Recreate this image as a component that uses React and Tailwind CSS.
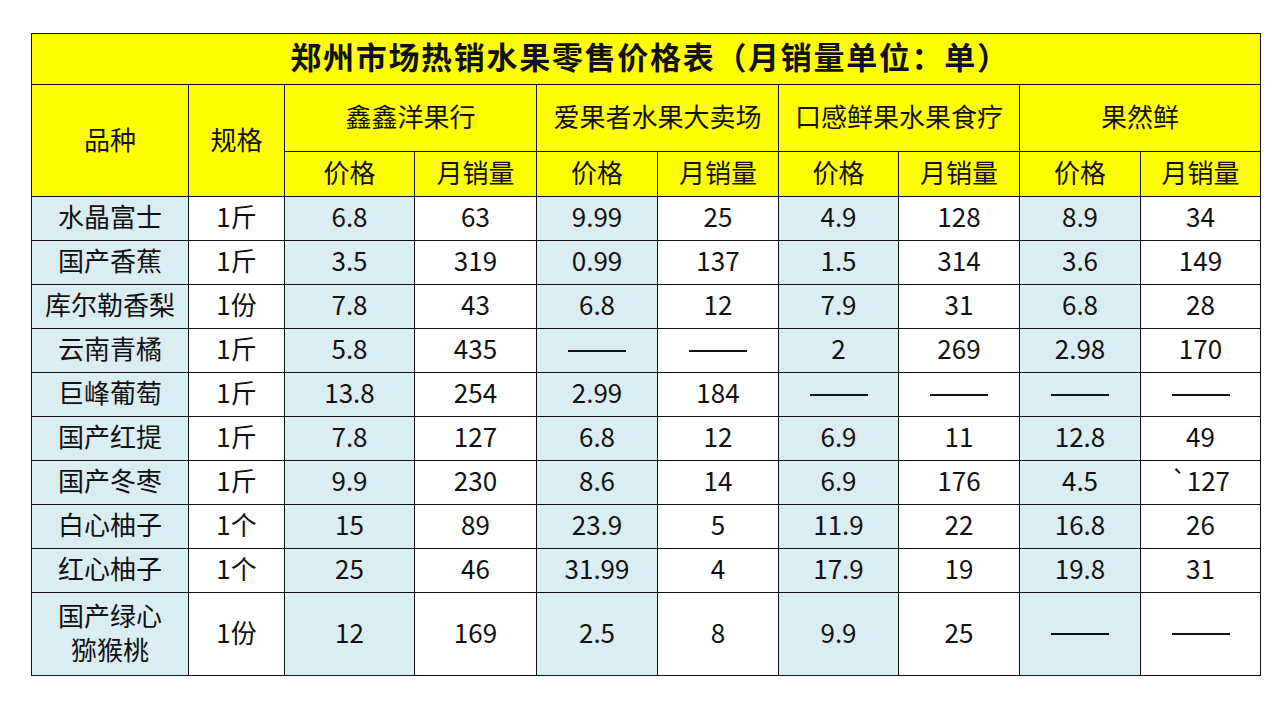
import React from "react";

const stores = ["鑫鑫洋果行", "爱果者水果大卖场", "口感鲜果水果食疗", "果然鲜"];

const D = "——";
const rows = [
  ["水晶富士", "1斤", "6.8", "63", "9.99", "25", "4.9", "128", "8.9", "34"],
  ["国产香蕉", "1斤", "3.5", "319", "0.99", "137", "1.5", "314", "3.6", "149"],
  ["库尔勒香梨", "1份", "7.8", "43", "6.8", "12", "7.9", "31", "6.8", "28"],
  ["云南青橘", "1斤", "5.8", "435", D, D, "2", "269", "2.98", "170"],
  ["巨峰葡萄", "1斤", "13.8", "254", "2.99", "184", D, D, D, D],
  ["国产红提", "1斤", "7.8", "127", "6.8", "12", "6.9", "11", "12.8", "49"],
  ["国产冬枣", "1斤", "9.9", "230", "8.6", "14", "6.9", "176", "4.5", "`127"],
  ["白心柚子", "1个", "15", "89", "23.9", "5", "11.9", "22", "16.8", "26"],
  ["红心柚子", "1个", "25", "46", "31.99", "4", "17.9", "19", "19.8", "31"],
  ["国产绿心\n猕猴桃", "1份", "12", "169", "2.5", "8", "9.9", "25", D, D],
];

function Cell({ value, blue }) {
  const isDash = value === D;
  return (
    <div
      className={`flex items-center justify-center text-center leading-[34px] pb-[5px] ${
        blue ? "bg-[#daedf3]" : "bg-white"
      }`}
    >
      {isDash ? (
        <span className="block w-[58px] h-[2px] mt-[5px] bg-[#111]" aria-label="——" />
      ) : (
        <span className="whitespace-pre-line">{value}</span>
      )}
    </div>
  );
}

export default function App() {
  return (
    <div className="min-h-[720px] w-[1280px] bg-white pt-[33px] pl-[31px] font-['Noto_Sans_CJK_SC','Noto_Sans',sans-serif] text-[#111] text-[26px]">
      <div className="inline-grid gap-px p-px bg-[#111] grid-cols-[156px_95px_129px_121px_120px_120px_119px_120px_120px_119px] grid-rows-[50px_66px_44px_repeat(9,43px)_82px]">
        <div className="col-span-10 bg-[#ffff00] flex items-center justify-center pb-[5px] pl-[8px] font-bold text-[31px] tracking-[1.7px]">
          郑州市场热销水果零售价格表（月销量单位：单）
        </div>
        <div className="row-span-2 bg-[#ffff00] flex items-center justify-center pb-[5px]">品种</div>
        <div className="row-span-2 bg-[#ffff00] flex items-center justify-center pb-[5px]">规格</div>
        {stores.map((s) => (
          <div key={s} className="col-span-2 bg-[#ffff00] flex items-center justify-center pb-[5px]">
            {s}
          </div>
        ))}
        {stores.map((s) => (
          <React.Fragment key={s + "h"}>
            <div className="bg-[#ffff00] flex items-center justify-center pb-[5px]">价格</div>
            <div className="bg-[#ffff00] flex items-center justify-center pb-[5px]">月销量</div>
          </React.Fragment>
        ))}
        {rows.map((r, ri) =>
          r.map((v, ci) => (
            <Cell
              key={ri + "-" + ci}
              value={v}
              blue={ci === 0 || (ci >= 2 && ci % 2 === 0)}
            />
          ))
        )}
      </div>
    </div>
  );
}
